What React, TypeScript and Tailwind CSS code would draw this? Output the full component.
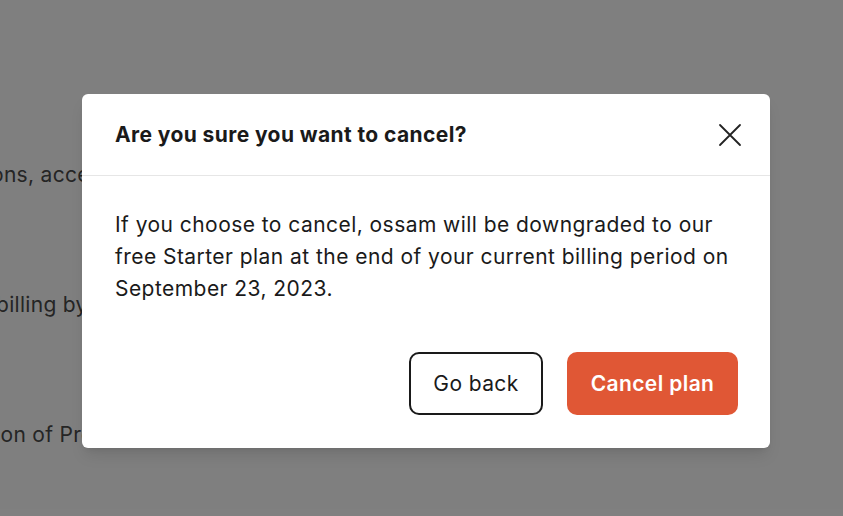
import React from "react";

export default function App() {
  return (
    <div className="relative w-[843px] h-[516px] overflow-hidden bg-white" style={{ fontFamily: "Inter, 'Noto Sans', sans-serif" }}>
      {/* background page */}
      <div className="flex flex-col text-[21px] tracking-[0.3px] leading-[28px] text-[#4a4a4a] pt-[161px] gap-[102px] whitespace-nowrap">
        <div className="ml-[-9px]">ons, access and notifications</div>
        <div className="ml-[-4px]">billing by email</div>
        <div className="ml-[-12px]">tion of Pro</div>
      </div>
      {/* overlay */}
      <div className="absolute inset-0 bg-[#000000]/50 pt-[94px] pl-[82px]">
        <div className="w-[688px] h-[354px] bg-white rounded-[6px] shadow-lg flex flex-col">
          <div className="h-[82px] shrink-0 flex items-center justify-between pl-[33px] pr-[28px] border-b border-[#e6e6e6]">
            <h2 className="text-[21px] font-bold text-[#1a1a1a] tracking-[0.4px]">Are you sure you want to cancel?</h2>
            <svg width="24" height="24" viewBox="0 0 24 24" fill="none" stroke="#222" strokeWidth="1.8" strokeLinecap="round">
              <path d="M2 2 L22 22 M22 2 L2 22" />
            </svg>
          </div>
          <div className="pl-[33px] pr-[28px] pt-[33px] text-[21px] tracking-[0.45px] leading-[32px] text-[#1a1a1a]">
            If you choose to cancel, ossam will be downgraded to our free Starter plan at the end of your current billing period on September 23, 2023.
          </div>
          <div className="flex justify-end gap-[24px] pr-[32px] mt-[47px]">
            <button className="w-[134px] h-[63px] border-2 border-[#1a1a1a] rounded-[10px] text-[21px] tracking-[0.4px] text-[#1a1a1a] bg-white">Go back</button>
            <button className="w-[171px] h-[63px] rounded-[10px] text-[21px] tracking-[0.4px] font-semibold text-white bg-[#e05735]">Cancel plan</button>
          </div>
        </div>
      </div>
    </div>
  );
}
